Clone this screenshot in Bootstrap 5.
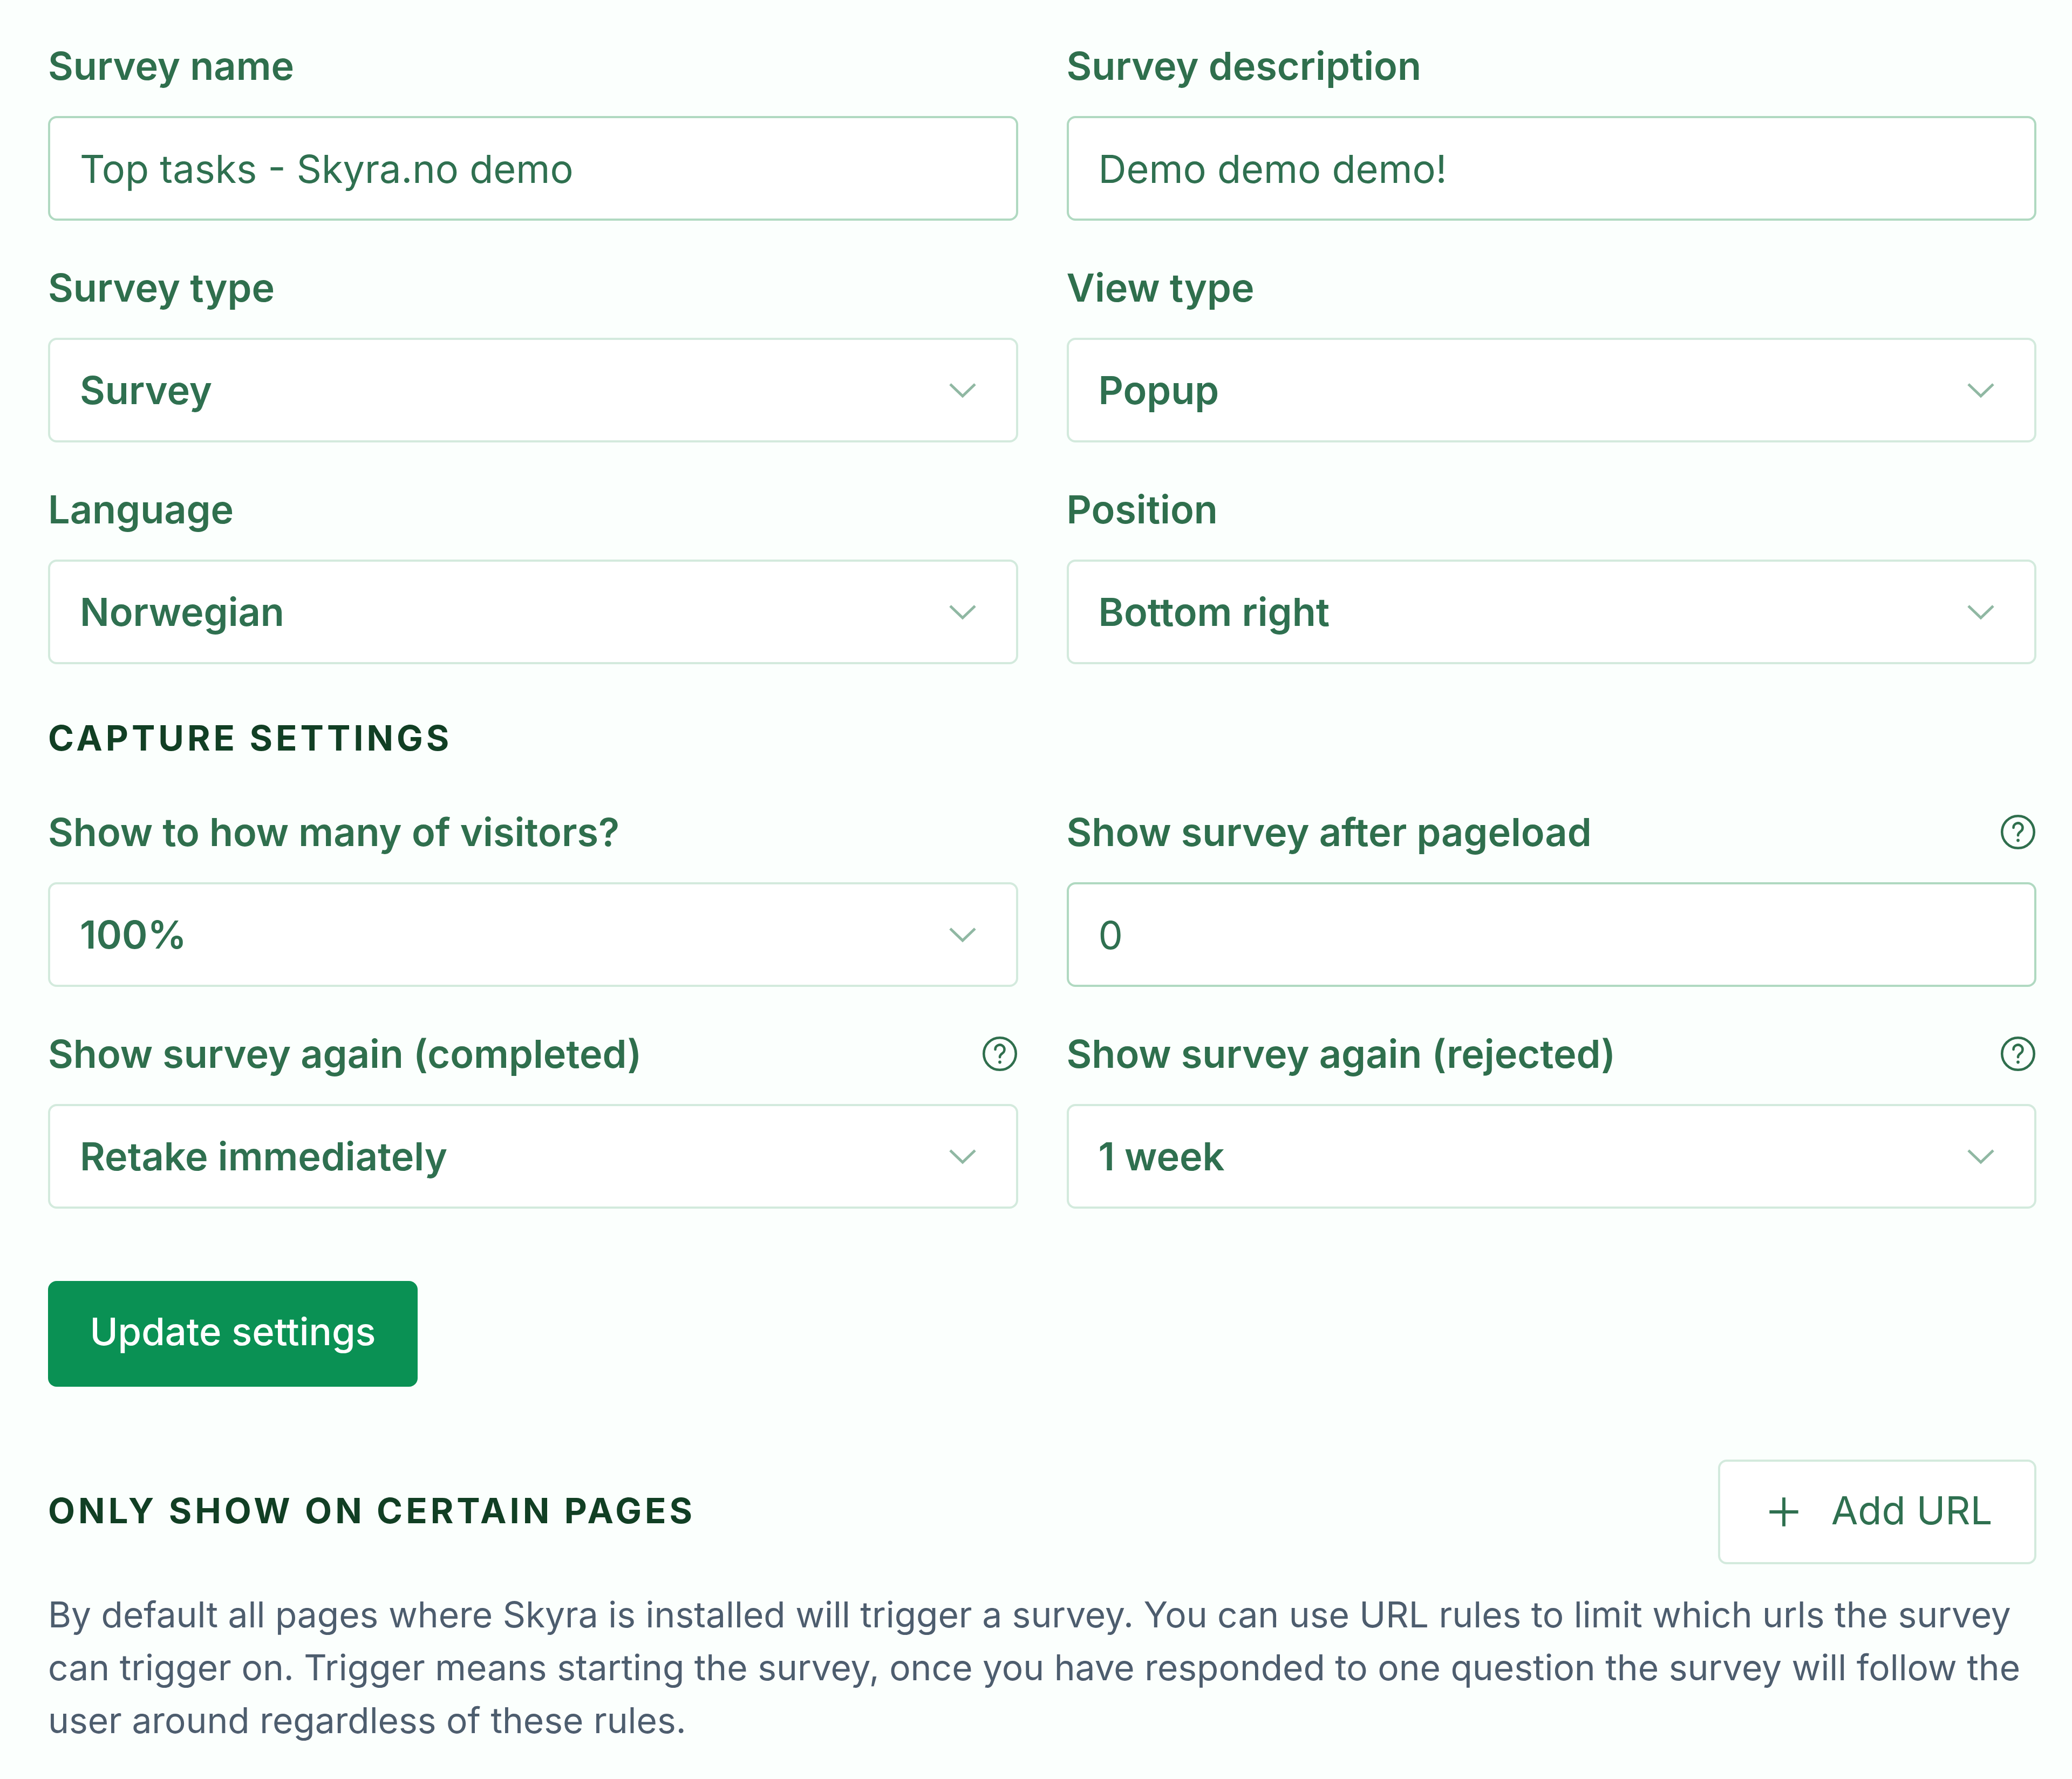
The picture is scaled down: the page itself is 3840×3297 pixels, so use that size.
<!DOCTYPE html>
<html lang="en">
<head>
<meta charset="utf-8">
<title>Survey settings</title>
<link href="https://cdn.jsdelivr.net/npm/bootstrap@5.3.0/dist/css/bootstrap.min.css" rel="stylesheet">
<style>
html,body{margin:0;background:#fbfffd;}
body{font-family:Inter,"Liberation Sans",sans-serif;font-size:72px;line-height:98px;-webkit-font-smoothing:antialiased;}
.sheet{padding:73px 66px 40px 89px;}
.pair{--bs-gutter-x:90px;--bs-gutter-y:0;margin-bottom:75px;}
.pair.last-pair{margin-bottom:134px;}
.fld-label{display:flex;justify-content:space-between;align-items:center;margin-bottom:44px;font-size:72px;line-height:98px;font-weight:600;color:#2f6f4d;letter-spacing:0;}
.help-ic{width:68px;height:68px;flex:none;color:#2f6f4d;}
.form-control.fld,.form-select.fld{height:194px;padding:0 55px;font-size:72px;line-height:98px;background-color:#fff;color:#2f7050;border:4px solid #b0d9c1;border-radius:16px;box-shadow:none;font-family:inherit;}
.form-select.fld{font-weight:600;border-color:#d3eadd;padding-left:55px;padding-right:160px;background-size:52px 30px;background-position:right 73px center;background-repeat:no-repeat;background-image:url("data:image/svg+xml,%3Csvg xmlns='http://www.w3.org/2000/svg' viewBox='0 0 52 30'%3E%3Cpath d='M3 4 26 26 49 4' fill='none' stroke='%2390b8a3' stroke-width='5'/%3E%3C/svg%3E");}
.sect-title{font-size:65px;line-height:98px;font-weight:700;letter-spacing:6px;color:#113f24;text-transform:uppercase;margin:0;}
.sect-one{margin-top:88px;margin-bottom:76px;}
.url-bar .sect-title{margin-bottom:5px;}
.btn.save-btn{display:block;width:685px;height:196px;padding:0 0 8px;font-size:70.5px;line-height:1;font-weight:500;background:#0a9154;border:0;border-radius:16px;color:#fff;}
.url-bar{margin-top:135px;margin-bottom:44px;}
.btn.add-btn{display:flex;align-items:center;justify-content:center;gap:56px;width:590px;height:194px;padding:0 0 0 8px;font-size:72px;line-height:1;font-weight:400;background:#fff;color:#2f7050;border:4px solid #d3eadd;border-radius:16px;}
.add-btn span{margin-bottom:6px;}
.add-btn svg{width:64px;height:64px;}
.intro{margin:0;font-size:65.85px;line-height:98px;color:#4d5d6e;}
</style>
</head>
<body>
<main class="sheet">
  <form>
    <div class="row pair">
      <div class="col-6"><label class="fld-label" for="f1">Survey name</label><input id="f1" class="form-control fld" value="Top tasks - Skyra.no demo"></div>
      <div class="col-6"><label class="fld-label" for="f2">Survey description</label><input id="f2" class="form-control fld" value="Demo demo demo!"></div>
    </div>
    <div class="row pair">
      <div class="col-6"><label class="fld-label" for="f3">Survey type</label><select id="f3" class="form-select fld"><option>Survey</option></select></div>
      <div class="col-6"><label class="fld-label" for="f4">View type</label><select id="f4" class="form-select fld"><option>Popup</option></select></div>
    </div>
    <div class="row pair">
      <div class="col-6"><label class="fld-label" for="f5">Language</label><select id="f5" class="form-select fld"><option>Norwegian</option></select></div>
      <div class="col-6"><label class="fld-label" for="f6">Position</label><select id="f6" class="form-select fld"><option>Bottom right</option></select></div>
    </div>
    <h2 class="sect-title sect-one">Capture settings</h2>
    <div class="row pair">
      <div class="col-6"><label class="fld-label" for="f7">Show to how many of visitors?</label><select id="f7" class="form-select fld"><option>100%</option></select></div>
      <div class="col-6"><label class="fld-label" for="f8"><span>Show survey after pageload</span><svg class="help-ic" viewBox="0 0 24 24" fill="none" stroke="currentColor" stroke-width="1.6" stroke-linecap="round"><circle cx="12" cy="12" r="10.5"/><path d="M9 9.2a3 3 0 1 1 4.6 2.5c-1 .7-1.6 1.2-1.6 2.5"/><path d="M12 17.4v.1" stroke-width="2"/></svg></label><input id="f8" class="form-control fld" value="0"></div>
    </div>
    <div class="row pair last-pair">
      <div class="col-6"><label class="fld-label" for="f9"><span>Show survey again (completed)</span><svg class="help-ic" viewBox="0 0 24 24" fill="none" stroke="currentColor" stroke-width="1.6" stroke-linecap="round"><circle cx="12" cy="12" r="10.5"/><path d="M9 9.2a3 3 0 1 1 4.6 2.5c-1 .7-1.6 1.2-1.6 2.5"/><path d="M12 17.4v.1" stroke-width="2"/></svg></label><select id="f9" class="form-select fld"><option>Retake immediately</option></select></div>
      <div class="col-6"><label class="fld-label" for="f10"><span>Show survey again (rejected)</span><svg class="help-ic" viewBox="0 0 24 24" fill="none" stroke="currentColor" stroke-width="1.6" stroke-linecap="round"><circle cx="12" cy="12" r="10.5"/><path d="M9 9.2a3 3 0 1 1 4.6 2.5c-1 .7-1.6 1.2-1.6 2.5"/><path d="M12 17.4v.1" stroke-width="2"/></svg></label><select id="f10" class="form-select fld"><option>1 week</option></select></div>
    </div>
    <button type="button" class="btn save-btn">Update settings</button>
  </form>
  <div class="d-flex justify-content-between align-items-center url-bar">
    <h2 class="sect-title">Only show on certain pages</h2>
    <button type="button" class="btn add-btn"><svg viewBox="0 0 24 24" fill="none" stroke="currentColor" stroke-width="2.2"><path d="M12 2v20M2 12h20"/></svg><span>Add URL</span></button>
  </div>
  <p class="intro">By default all pages where Skyra is installed will trigger a survey. You can use URL rules to limit which urls the survey can trigger on. Trigger means starting the survey, once you have responded to one question the survey will follow the user around regardless of these rules.</p>
</main>
<script src="https://cdn.jsdelivr.net/npm/bootstrap@5.3.0/dist/js/bootstrap.bundle.min.js"></script>
</body>
</html>
